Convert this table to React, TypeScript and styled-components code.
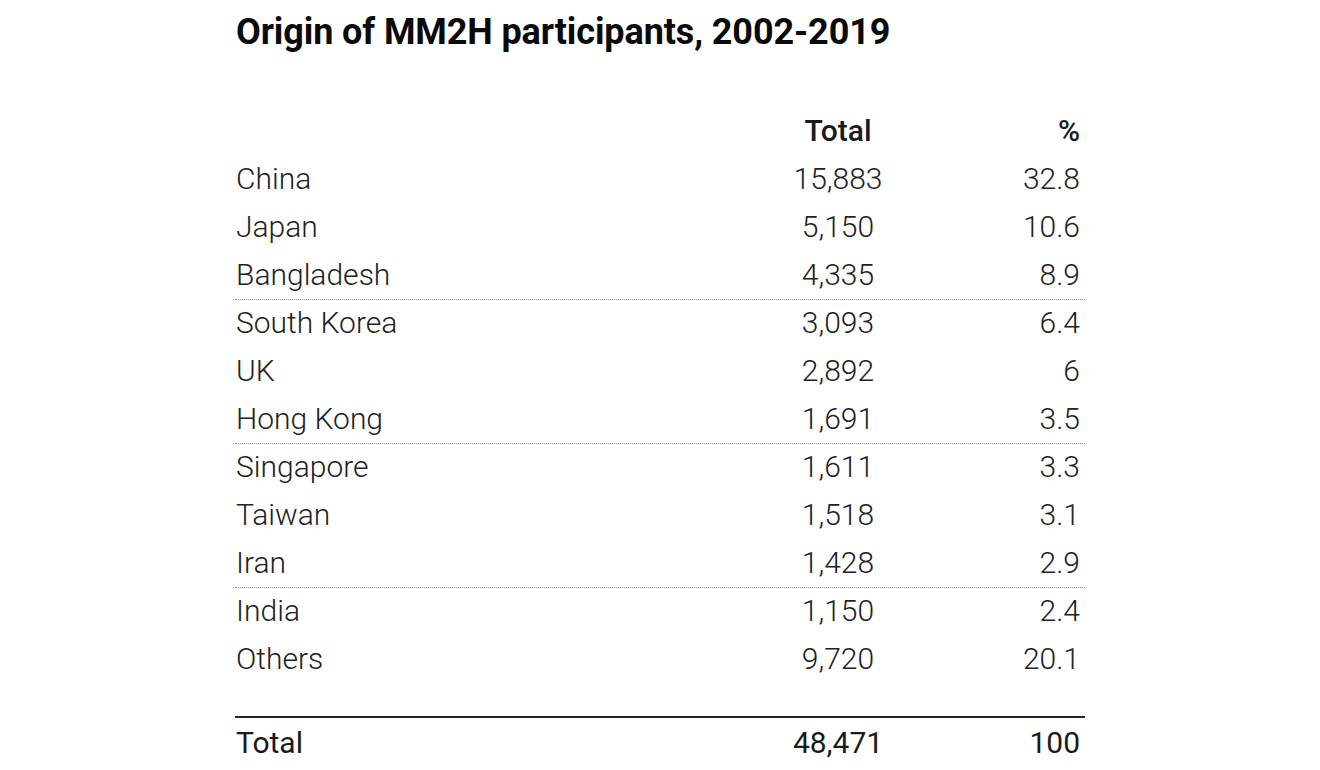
import styled, { createGlobalStyle } from "styled-components";

interface Row {
  country: string;
  total: string;
  pct: string;
  /** dotted rule under the row */
  divider?: boolean;
}

const rows: Row[] = [
  { country: "China", total: "15,883", pct: "32.8" },
  { country: "Japan", total: "5,150", pct: "10.6" },
  { country: "Bangladesh", total: "4,335", pct: "8.9", divider: true },
  { country: "South Korea", total: "3,093", pct: "6.4" },
  { country: "UK", total: "2,892", pct: "6" },
  { country: "Hong Kong", total: "1,691", pct: "3.5", divider: true },
  { country: "Singapore", total: "1,611", pct: "3.3" },
  { country: "Taiwan", total: "1,518", pct: "3.1" },
  { country: "Iran", total: "1,428", pct: "2.9", divider: true },
  { country: "India", total: "1,150", pct: "2.4" },
  { country: "Others", total: "9,720", pct: "20.1" },
];

const App = () => {
  return (
    <>
      <GlobalStyle />
      <Page>
        <Title>Origin of MM2H participants, 2002-2019</Title>
        <Table>
          <HeadRow>
            <Cell />
            <NumCell>Total</NumCell>
            <PctCell>%</PctCell>
          </HeadRow>
          {rows.map((row) => (
            <BodyRow key={row.country} $divider={!!row.divider}>
              <Cell>{row.country}</Cell>
              <NumCell>{row.total}</NumCell>
              <PctCell>{row.pct}</PctCell>
            </BodyRow>
          ))}
          <TotalRow>
            <Cell>Total</Cell>
            <NumCell>48,471</NumCell>
            <PctCell>100</PctCell>
          </TotalRow>
        </Table>
      </Page>
    </>
  );
};

export default App;

const GlobalStyle = createGlobalStyle`
  html, body {
    margin: 0;
    padding: 0;
    background: #ffffff;
  }
  body {
    font-family: Roboto, "Liberation Sans", sans-serif;
    color: #222222;
  }
`;

const Page = styled.div`
  width: 1320px;
  height: 770px;
  overflow: hidden;
  padding-left: 235px;
  padding-top: 8px;
  box-sizing: border-box;
`;

const Title = styled.h1`
  margin: 0 0 51px 0;
  font-size: 36px;
  font-weight: 700;
  line-height: 48px;
  letter-spacing: -0.1px;
  color: #0a0a0a;
  padding-left: 1px;
`;

const Table = styled.div`
  width: 850px;
  display: flex;
  flex-direction: column;
`;

const RowBase = styled.div`
  display: grid;
  grid-template-columns: 1fr 120px 182px;
  padding: 0 5px 0 1px;
  height: 48px;
  line-height: 48px;
  font-size: 30px;
`;

const HeadRow = styled(RowBase)`
  font-weight: 500;
  color: #1a1a1a;
`;

const BodyRow = styled(RowBase)<{ $divider: boolean }>`
  font-weight: 300;
  color: #222222;
  ${({ $divider }) =>
    $divider &&
    `
    border-bottom: 1px dotted #8a8a8a;
    margin-bottom: -1px;
  `}
`;

const TotalRow = styled(RowBase)`
  margin-top: 33px;
  border-top: 2px solid #222222;
  line-height: 50px;
  font-weight: 400;
  color: #1a1a1a;
`;

const Cell = styled.div`
  white-space: nowrap;
`;

const NumCell = styled(Cell)`
  text-align: center;
`;

const PctCell = styled(Cell)`
  text-align: right;
`;
